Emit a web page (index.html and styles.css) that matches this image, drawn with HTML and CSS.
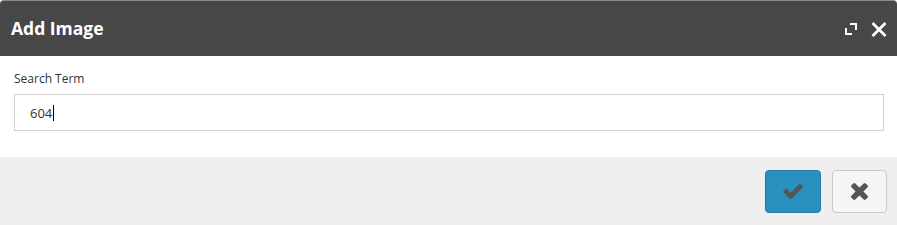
FILE: index.html
```html
<!DOCTYPE html>
<html>
<head>
<meta charset="utf-8">
<title>Add Image</title>
<link rel="stylesheet" href="styles.css">
</head>
<body>
<div class="dialog">
  <div class="header">
    <div class="title">Add Image</div>
    <div class="header-tools">
      <svg class="resize" width="12" height="12" viewBox="0 0 12 12"><path d="M1 5 V11 H7 M5 1 H11 V7" fill="none" stroke="#fff" stroke-width="2"/></svg>
      <svg class="close" width="16" height="17" viewBox="0 0 16 17"><path d="M1.5 2 L14.5 15 M14.5 2 L1.5 15" stroke="#fff" stroke-width="2.8" stroke-linecap="butt"/></svg>
    </div>
  </div>
  <div class="body">
    <div class="label">Search Term</div>
    <div class="input"><span class="value">604</span><span class="caret"></span></div>
  </div>
  <div class="footer">
    <button class="btn btn-ok"><svg width="20" height="15" viewBox="121 334 1550 1188"><path fill="#555" d="M1671 566q0 40-28 68l-724 724-136 136q-28 28-68 28t-68-28l-136-136-362-362q-28-28-28-68t28-68l136-136q28-28 68-28t68 28l294 295 656-657q28-28 68-28t68 28l136 136q28 28 28 68z"/></svg></button>
    <button class="btn btn-cancel"><svg width="17" height="17" viewBox="302 366 1188 1188"><path fill="#555" d="M1490 1322q0 40-28 68l-136 136q-28 28-68 28t-68-28l-294-294-294 294q-28 28-68 28t-68-28l-136-136q-28-28-28-68t28-68l294-294-294-294q-28-28-28-68t28-68l136-136q28-28 68-28t68 28l294 294 294-294q28-28 68-28t68 28l136 136q28 28 28 68t-28 68l-294 294 294 294q28 28 28 68z"/></svg></button>
  </div>
</div>
</body>
</html>
```

FILE: styles.css
```css
html, body {
  margin: 0;
  padding: 0;
  background: #ffffff;
}
body {
  font-family: "Open Sans", "Liberation Sans", sans-serif;
  width: 897px;
  height: 225px;
  overflow: hidden;
}
.dialog {
  display: flex;
  flex-direction: column;
  height: 225px;
}
.header {
  height: 55px;
  background: #474747;
  border-top: 1px solid #8c8c8c;
  border-radius: 4px 4px 0 0;
  display: flex;
  align-items: center;
  justify-content: space-between;
  padding: 0 10px 0 11px;
}
.title {
  color: #ffffff;
  font-size: 17.5px;
  font-weight: 700;
  line-height: 55px;
}
.header-tools {
  display: flex;
  align-items: center;
  gap: 14px;
  padding-top: 1px;
}
.resize {
  display: block;
}
.close {
  display: block;
}
.body {
  padding: 15px 13px 26px 14px;
  background: #ffffff;
}
.label {
  font-size: 12px;
  line-height: 16px;
  color: #333;
  margin-bottom: 7px;
}
.input {
  height: 35px;
  border: 1px solid #d0d0d0;
  display: flex;
  align-items: center;
  padding-left: 15px;
  font-size: 13px;
  color: #333;
}
.caret {
  display: inline-block;
  width: 1px;
  height: 16px;
  background: #000;
  margin-left: 1px;
}
.footer {
  flex: 1;
  background: #efefef;
  display: flex;
  justify-content: flex-end;
  align-items: flex-start;
  gap: 11px;
  padding: 13px 10px 0 0;
}
.btn {
  height: 43px;
  border-radius: 4px;
  display: flex;
  align-items: center;
  justify-content: center;
  padding: 0;
  cursor: pointer;
}
.btn svg {
  display: block;
}
.btn-ok {
  width: 56px;
  background: #2a90bf;
  border: 1px solid #237aa3;
}
.btn-cancel {
  width: 55px;
  background: #f5f5f5;
  border: 1px solid #c8c8c8;
}
```
